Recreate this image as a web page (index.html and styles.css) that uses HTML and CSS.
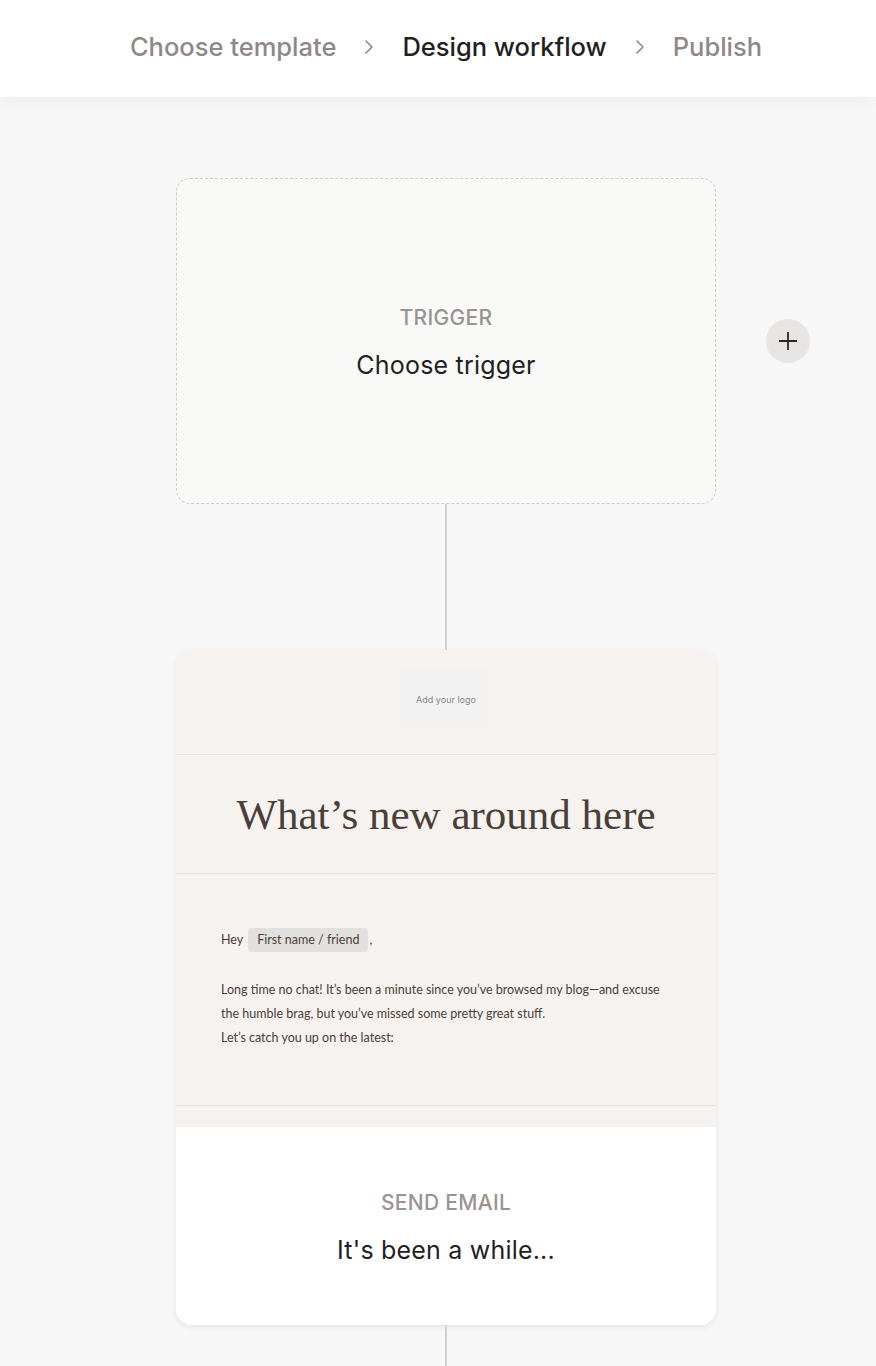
FILE: index.html
```html
<!DOCTYPE html>
<html lang="en">

	<head>
		<meta charset="utf-8">
		<title>Design workflow</title>
		<meta name="viewport" content="width=device-width, initial-scale=1.0">

		<link rel="stylesheet" href="styles.css">
	</head>

	<body>

		<header class="steps">
			<span class="step">Choose template</span>
			<svg class="chevron" viewBox="0 0 12 16" width="12" height="16" aria-hidden="true">
				<path d="M3 2 L9 8 L3 14" fill="none" stroke="currentColor" stroke-width="1.6" stroke-linecap="round" stroke-linejoin="round"/>
			</svg>
			<span class="step step-current">Design workflow</span>
			<svg class="chevron" viewBox="0 0 12 16" width="12" height="16" aria-hidden="true">
				<path d="M3 2 L9 8 L3 14" fill="none" stroke="currentColor" stroke-width="1.6" stroke-linecap="round" stroke-linejoin="round"/>
			</svg>
			<span class="step">Publish</span>
		</header>

		<main class="flow">

			<div class="row">
				<div class="node node-trigger">
					<p class="node-kind">Trigger</p>
					<p class="node-title">Choose trigger</p>
				</div>
				<button class="add" type="button" aria-label="Add">
					<svg viewBox="0 0 24 24" width="24" height="24" aria-hidden="true">
						<path d="M12 3 V21 M3 12 H21" fill="none" stroke="currentColor" stroke-width="1.8"/>
					</svg>
				</button>
			</div>

			<div class="line line-long"></div>

			<div class="node node-email">
				<div class="preview">
					<div class="preview-logo">
						<span class="logo-box">Add your logo</span>
					</div>
					<h2 class="preview-heading">What’s new around here</h2>
					<div class="preview-body">
						<p>Hey <span class="tag">First name / friend</span>,</p>
						<p>Long time no chat! It’s been a minute since you’ve browsed my blog—and excuse the humble brag, but you’ve missed some pretty great stuff.<br>Let’s catch you up on the latest:</p>
					</div>
					<div class="preview-foot"></div>
				</div>
				<div class="email-info">
					<p class="node-kind">Send email</p>
					<p class="node-title">It's been a while...</p>
				</div>
			</div>

			<div class="line"></div>

		</main>

	</body>
</html>
```

FILE: styles.css
```css
body {
	margin: 0;
	background: #f7f7f7;
	font-family: Inter, "Liberation Sans", sans-serif;
	color: #231f1f;
}

p {
	margin: 0;
}

/* steps bar */

.steps {
	position: relative;
	display: flex;
	align-items: center;
	justify-content: center;
	gap: 27px;
	height: 97px;
	padding: 0 0 4px 16px;
	box-sizing: border-box;
	background: #fff;
	box-shadow: 0 3px 18px rgba(0, 0, 0, 0.05);
	font-size: 25.5px;
	font-weight: 500;
}

.step {
	color: #8f8886;
}

.step-current {
	color: #231f1f;
}

.chevron {
	color: #8f8886;
}

/* workflow */

.flow {
	display: flex;
	flex-direction: column;
	align-items: center;
	padding: 81px 0 0 16px;
}

.row {
	display: flex;
	align-items: center;
	margin-left: 94px;
	gap: 50px;
}

.node {
	width: 540px;
	box-sizing: border-box;
	text-align: center;
}

.node-trigger {
	display: flex;
	flex-direction: column;
	justify-content: center;
	gap: 20px;
	height: 326px;
	border: 1px dashed #cfcdcb;
	border-radius: 14px;
	background: #f9f9f8;
	padding-top: 4px;
}

.node-kind {
	font-size: 21px;
	font-weight: 500;
	letter-spacing: 0.3px;
	text-transform: uppercase;
	color: #9a9391;
	line-height: 24px;
}

.node-title {
	font-size: 25px;
	letter-spacing: 0.2px;
	line-height: 30px;
	color: #231f1f;
}

.add {
	display: flex;
	align-items: center;
	justify-content: center;
	width: 44px;
	height: 44px;
	border: 0;
	border-radius: 50%;
	background: #e6e5e4;
	color: #2a2626;
	padding: 0;
}

.line {
	width: 2px;
	height: 42px;
	background: #d3d0ce;
}

.line-long {
	height: 146px;
}

/* email node */

.node-email {
	border-radius: 16px;
	overflow: hidden;
	background: #fff;
	box-shadow: 0 2px 6px rgba(0, 0, 0, 0.08);
}

.preview {
	background: #f5f2ef;
	color: #4a3f38;
}

.preview-logo {
	display: flex;
	justify-content: center;
	padding: 19px 0 25px;
	border-bottom: 1px solid #e4e2de;
}

.logo-box {
	display: flex;
	align-items: center;
	justify-content: center;
	width: 92px;
	height: 60px;
	background: #f2f2f2;
	font-family: Inter, "Liberation Sans", sans-serif;
	font-size: 9px;
	color: #8a8584;
}

.preview-heading {
	margin: 0;
	height: 118px;
	line-height: 120px;
	border-bottom: 1px solid #e4e2de;
	font-family: "Liberation Serif", serif;
	font-size: 43px;
	font-weight: 400;
	color: #4a3f38;
}

.preview-body {
	text-align: left;
	padding: 54px 45px 55px;
	font-family: Lato, "Open Sans", sans-serif;
	font-size: 12.5px;
	line-height: 24px;
	border-bottom: 1px solid #e4e2de;
}

.preview-body p + p {
	margin-top: 26px;
}

.tag {
	display: inline-block;
	padding: 0 9px;
	line-height: 24px;
	border-radius: 4px;
	background: #e2e0de;
	margin: 0 1px 0 2px;
}

.preview-foot {
	height: 21px;
}

.email-info {
	display: flex;
	flex-direction: column;
	justify-content: center;
	gap: 20px;
	height: 198px;
	background: #fff;
	padding-top: 3px;
	box-sizing: border-box;
}
```
